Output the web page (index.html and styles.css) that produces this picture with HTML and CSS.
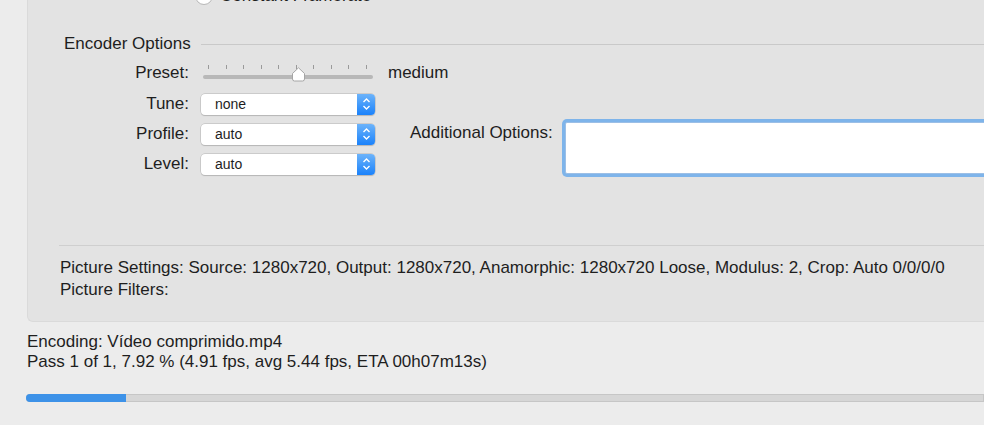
FILE: index.html
```html
<!DOCTYPE html>
<html>
<head>
<meta charset="utf-8">
<link rel="stylesheet" href="styles.css">
</head>
<body>
<div class="window">
  <div class="panel">
    <div class="radio-row">
      <span class="radio"></span>
      <span class="radio-label">Constant Framerate</span>
    </div>

    <div class="section-head">
      <span class="section-title">Encoder Options</span>
      <span class="section-line"></span>
    </div>

    <div class="encoder">
      <div class="form">
        <div class="row preset-row">
          <span class="label">Preset:</span>
          <div class="slider">
            <div class="ticks">
              <i></i><i></i><i></i><i></i><i></i><i></i><i></i><i></i><i></i><i></i>
            </div>
            <div class="track"></div>
            <svg class="knob" width="15" height="15" viewBox="0 0 15 15">
              <path d="M7.5 0.8 L13.5 6.5 L13.5 12 Q13.5 14 11.5 14 L3.5 14 Q1.5 14 1.5 12 L1.5 6.5 Z" fill="#fff" stroke="#a5a5a5" stroke-width="1"/>
            </svg>
          </div>
          <span class="slider-value">medium</span>
        </div>
        <div class="row">
          <span class="label">Tune:</span>
          <div class="popup"><span class="popup-text">none</span><span class="stepper"><svg width="9" height="14" viewBox="0 0 9 14"><path d="M1.5 5 L4.5 2 L7.5 5 M1.5 9 L4.5 12 L7.5 9" fill="none" stroke="#fff" stroke-width="1.4"/></svg></span></div>
        </div>
        <div class="row">
          <span class="label">Profile:</span>
          <div class="popup"><span class="popup-text">auto</span><span class="stepper"><svg width="9" height="14" viewBox="0 0 9 14"><path d="M1.5 5 L4.5 2 L7.5 5 M1.5 9 L4.5 12 L7.5 9" fill="none" stroke="#fff" stroke-width="1.4"/></svg></span></div>
        </div>
        <div class="row">
          <span class="label">Level:</span>
          <div class="popup"><span class="popup-text">auto</span><span class="stepper"><svg width="9" height="14" viewBox="0 0 9 14"><path d="M1.5 5 L4.5 2 L7.5 5 M1.5 9 L4.5 12 L7.5 9" fill="none" stroke="#fff" stroke-width="1.4"/></svg></span></div>
        </div>
      </div>
      <div class="additional">
        <span class="add-label">Additional Options:</span>
        <div class="textarea"></div>
      </div>
    </div>

    <div class="separator"></div>
    <div class="summary">
      <div>Picture Settings: Source: 1280x720, Output: 1280x720, Anamorphic: 1280x720 Loose, Modulus: 2, Crop: Auto 0/0/0/0</div>
      <div>Picture Filters:</div>
    </div>
  </div>

  <div class="status">
    <div>Encoding: Vídeo comprimido.mp4</div>
    <div>Pass 1 of 1, 7.92 % (4.91 fps, avg 5.44 fps, ETA 00h07m13s)</div>
  </div>

  <div class="progress"><div class="progress-fill" style="width:100px"></div></div>
</div>
</body>
</html>
```

FILE: styles.css
```css
html, body {
  margin: 0;
  padding: 0;
}
body {
  width: 984px;
  height: 425px;
  overflow: hidden;
  background: #ececec;
  font-family: "Liberation Sans", Arial, sans-serif;
  font-size: 17px;
  color: #1e1e1e;
}
.window {
  height: 425px;
}
.panel {
  margin-left: 27px;
  height: 322px;
  box-sizing: border-box;
  background: #e3e3e3;
  border-left: 1px solid #dadada;
  border-bottom: 1px solid #dadada;
  border-bottom-left-radius: 6px;
  overflow: hidden;
}
.radio-row {
  display: flex;
  align-items: center;
  margin-top: -13px;
  margin-left: 167px;
  height: 18px;
  line-height: 20px;
}
.radio {
  flex-shrink: 0;
  width: 18px;
  height: 18px;
  border-radius: 50%;
  background: #fff;
  border: 1px solid #b8b8b8;
  box-sizing: border-box;
}
.radio-label {
  margin-left: 7px;
  white-space: nowrap;
}
.section-head {
  display: flex;
  align-items: center;
  margin-top: 29px;
  height: 20px;
  line-height: 20px;
}
.section-title {
  flex-shrink: 0;
  margin-left: 36px;
  width: 137px;
  white-space: nowrap;
}
.section-line {
  flex: 1;
  height: 1px;
  background: #c9c9c9;
}
.encoder {
  display: flex;
}
.form {
  display: flex;
  flex-direction: column;
  flex-shrink: 0;
  width: 382px;
}
.row {
  display: flex;
  align-items: center;
  height: 30px;
  line-height: 20px;
}
.row > * {
  flex-shrink: 0;
}
.preset-row {
  height: 35px;
  align-items: flex-start;
}
.label {
  width: 161px;
  text-align: right;
  margin-right: 12px;
}
.preset-row .label,
.preset-row .slider-value {
  margin-top: 9px;
}
.slider {
  position: relative;
  width: 170px;
  margin-left: 2px;
}
.ticks {
  display: flex;
  justify-content: space-between;
  padding: 0 6px 0 5px;
  margin-top: 11px;
  height: 4px;
}
.ticks i {
  width: 1px;
  height: 4px;
  background: #9a9a9a;
}
.track {
  margin-top: 6px;
  height: 4px;
  border-radius: 2px;
  background: #b8b8b8;
}
.knob {
  position: absolute;
  left: 88px;
  top: 13px;
}
.slider-value {
  margin-left: 15px;
}
.popup {
  display: flex;
  width: 174px;
  height: 21px;
  box-sizing: border-box;
  background: #fff;
  border-radius: 4px;
  box-shadow: 0 0 0 0.5px #b4b4b4, 0 1px 1px rgba(0,0,0,0.18);
  overflow: hidden;
}
.popup-text {
  flex: 1;
  padding-left: 14px;
  font-size: 14px;
  line-height: 21px;
}
.stepper {
  width: 18px;
  display: flex;
  align-items: center;
  justify-content: center;
  background: linear-gradient(#6cb3fa, #1a82fb);
}
.additional {
  display: flex;
  align-items: flex-start;
  line-height: 20px;
}
.add-label {
  flex-shrink: 0;
  margin-top: 69px;
  margin-right: 12px;
  white-space: nowrap;
}
.textarea {
  flex-shrink: 0;
  margin-top: 68px;
  width: 600px;
  height: 52px;
  box-sizing: border-box;
  background: #fff;
  border: 1px solid #9cbfe6;
  box-shadow: 0 0 0 3px #7eb4ea;
  border-radius: 2px;
}
.separator {
  margin-top: 66px;
  margin-left: 31px;
  height: 1px;
  background: #cfcfcf;
}
.summary {
  margin-left: 32px;
  margin-top: 11px;
  line-height: 22px;
  white-space: nowrap;
}
.status {
  margin-left: 27px;
  margin-top: 10px;
  line-height: 20px;
}
.progress {
  margin-left: 26px;
  margin-top: 22px;
  height: 8px;
  border-radius: 4px 0 0 4px;
  background: #d6d6d6;
  box-shadow: inset 0 0 0 1px #c6c6c6;
  overflow: hidden;
}
.progress-fill {
  height: 100%;
  background: #3d92e8;
}
```
